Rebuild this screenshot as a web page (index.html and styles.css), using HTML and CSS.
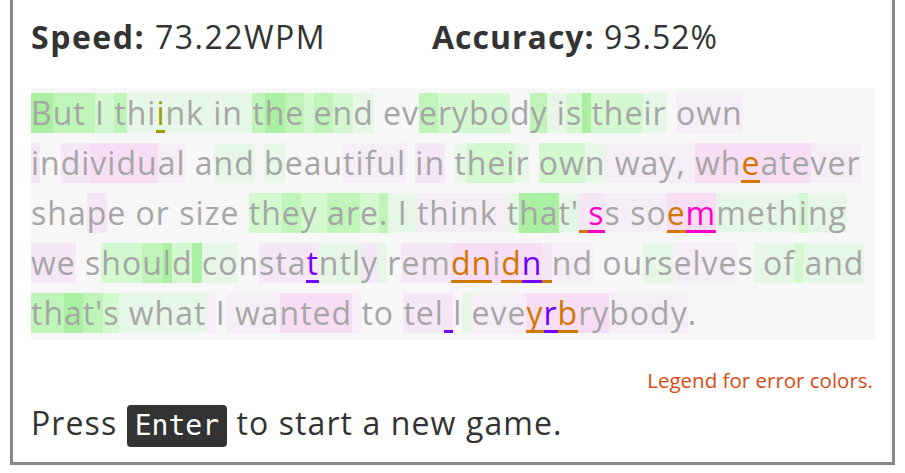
FILE: index.html
```html
<!DOCTYPE html>
<html>
<head>
<meta charset="utf-8">
<link rel="stylesheet" href="styles.css">
</head>
<body>
<div class="game">
  <div class="stats">
    <div class="stat stat-speed"><b>Speed:</b> 73.22WPM</div>
    <div class="stat"><b>Accuracy:</b> 93.52%</div>
  </div>
  <div class="text">
    <div class="line"><span class="g1">B</span><span class="g2">ut </span><span class="g3">I </span><span class="g2">t</span><span class="g4">hi</span><span class="g4 err e-ol">i</span><span class="g4">nk in </span><span class="g2">t</span><span class="g1">h</span><span class="g2">e</span><span class="g3"> </span><span class="g2">e</span><span class="g3">n</span><span class="g4">d</span><span> ev</span><span class="g2">e</span><span class="g3">rybo</span><span>d</span><span class="g2">y</span><span class="g4"> i</span><span class="g3">s</span><span class="g1"> </span><span class="g3">the</span><span class="g4">ir</span><span> </span><span class="p3">own</span></div>
    <div class="line"><span class="p2">i</span><span>n</span><span class="p2">di</span><span class="p1">vidu</span><span class="p3">al</span><span> a</span><span class="g4">nd</span><span> </span><span class="g4">b</span><span>eau</span><span class="p3">tiful</span><span> </span><span class="p2">in</span><span> </span><span class="g4">t</span><span class="g3">hei</span><span class="g4">r</span><span> </span><span class="g3">ow</span><span class="g4">n</span><span class="p3"> way, </span><span class="p1">wh</span><span class="p1 err e-or">e</span><span class="p1">ate</span><span class="p3">ver</span></div>
    <div class="line"><span>sha</span><span class="p2">p</span><span>e or size </span><span class="g3">th</span><span class="g2">e</span><span class="g3">y </span><span class="g2">ar</span><span class="g3">e</span><span class="g2">.</span><span class="g4"> I </span><span class="p3">think </span><span class="g4">t</span><span class="g1">ha</span><span class="g4">t'</span><span class="p2 err e-or"> </span><span class="p2 err e-mg">s</span><span class="p3">s so</span><span class="p1 err e-or">e</span><span class="p1 err e-mg">m</span><span class="g4">meth</span><span class="g3">i</span><span class="g4">ng</span></div>
    <div class="line"><span class="p2">we</span><span> s</span><span class="g3">ho</span><span class="g2">u</span><span class="g1">l</span><span class="g3">d</span><span class="g1"> </span><span class="g4">co</span><span>n</span><span class="p2">sta</span><span class="p2 err e-pu">t</span><span class="g4">ntl</span><span class="p2">y</span><span class="g4"> </span><span>r</span><span class="p2">em</span><span class="p1 err e-or">dn</span><span class="p1">i</span><span class="p1 err e-or">d</span><span class="p1 err e-pu">n</span><span class="p2 err e-or"> </span><span class="p3">nd</span><span> ou</span><span class="g4">rs</span><span class="p3">elve</span><span>s</span><span class="g4"> of</span><span class="g3"> </span><span class="g4">and</span></div>
    <div class="line"><span class="g2">th</span><span class="g1">a</span><span class="g2">t'</span><span class="g3">s</span><span class="g4"> what</span><span class="p3"> </span><span>I</span><span class="p3"> wa</span><span class="p1">nted</span><span class="p3"> </span><span>to </span><span class="p2">tel</span><span class="p2 err e-pu"> </span><span>l</span><span class="g4"> </span><span class="p3">eve</span><span class="p1 err e-or">y</span><span class="p1 err e-pu">r</span><span class="p1 err e-or">b</span><span class="p1">ry</span><span class="p3">body</span><span>.</span></div>
  </div>
  <div class="legend">Legend for error colors.</div>
  <div class="restart">Press <span class="key">Enter</span> to start a new game.</div>
</div>
</body>
</html>
```
FILE: styles.css
```css
html, body {
  margin: 0;
  padding: 0;
  background: #fff;
}
body {
  font-family: "Open Sans", "Noto Sans", sans-serif;
  color: #333;
}
.game {
  margin: 0 10px;
  height: 465px;
  box-sizing: border-box;
  border: 3px solid #888;
  border-top: none;
  padding: 0 17px 0 18px;
  display: flex;
  flex-direction: column;
}
.stats {
  display: flex;
  font-size: 32px;
  letter-spacing: 1px;
  line-height: 40px;
  padding-top: 17px;
  height: 88px;
  box-sizing: border-box;
  flex-shrink: 0;
}
.stat-speed {
  width: 401px;
  letter-spacing: 1.5px;
}
.stat b {
  font-weight: 700;
}
.text {
  background: #f7f7f7;
  padding-bottom: 2px;
  font-size: 32px;
  letter-spacing: 1px;
  color: #a6a6a6;
}
.line {
  height: 50px;
  padding-top: 5px;
  box-sizing: border-box;
  white-space: nowrap;
}
.line span {
  display: inline-block;
  white-space: pre;
  height: 40px;
  line-height: 40px;
  vertical-align: top;
  box-sizing: border-box;
}
.g1 { background: #aaf0a2; }
.g2 { background: #bff5b8; }
.g3 { background: #d4f8d0; }
.g4 { background: #e7f7e7; }
.p1 { background: #f8def5; }
.p2 { background: #f6e7f6; }
.p3 { background: #f6eef6; }
.err { border-bottom: 3px solid; }
.e-ol { color: #a09a00; border-color: #a09a00; }
.e-or { color: #d07800; border-color: #d07800; }
.e-mg { color: #ff00c8; border-color: #ff00c8; }
.e-pu { color: #7000ff; border-color: #7000ff; }
.legend {
  margin-top: 26px;
  text-align: right;
  font-size: 20.5px;
  line-height: 28px;
  color: #dd4814;
  padding-right: 2px;
}
.restart {
  margin-top: 7px;
  font-size: 32px;
  letter-spacing: 1.1px;
  line-height: 44px;
}
.key {
  display: inline-block;
  background: #333;
  color: #fff;
  font-family: "DejaVu Sans Mono", monospace;
  font-size: 28px;
  letter-spacing: 0;
  border-radius: 4px;
  padding: 0 8px;
  line-height: 42px;
}
```
